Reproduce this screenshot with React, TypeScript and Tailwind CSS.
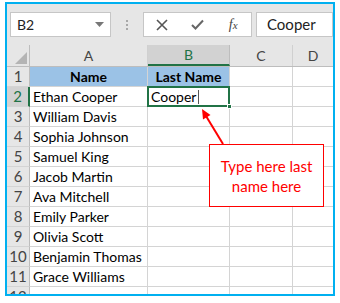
import React from "react";

const names = [
  "Ethan Cooper",
  "William Davis",
  "Sophia Johnson",
  "Samuel King",
  "Jacob Martin",
  "Ava Mitchell",
  "Emily Parker",
  "Olivia Scott",
  "Benjamin Thomas",
  "Grace Williams",
];

const font = { fontFamily: "Lato, 'Open Sans', 'Liberation Sans', sans-serif" };

function RowHead({ n, active }: { n: number | string; active?: boolean }) {
  return (
    <div
      className={
        "w-[23px] shrink-0 h-full flex items-center justify-center text-[15px] border-b border-[#d4d4d4] " +
        (active
          ? "bg-[#d2d2d2] text-[#217346] border-r-2 border-r-[#217346]"
          : "bg-[#e6e6e6] text-[#444] border-r border-r-[#bdbdbd]")
      }
    >
      {n}
    </div>
  );
}

export default function App() {
  return (
    <div className="w-[340px] h-[303px] bg-white pt-[2px] pl-[5px]" style={font}>
      <div className="w-[330px] h-[294px] border-2 border-[#00b0f0] overflow-hidden bg-white flex flex-col">
        {/* formula bar */}
        <div className="h-[41px] shrink-0 bg-[#e6e6e6] flex items-start pt-[8px] pl-[3px] gap-0">
          <div className="w-[101px] h-[25px] bg-white border border-[#c6c6c6] flex items-center pl-[6px] pr-[6px] justify-between">
            <span className="text-[14px] text-[#222]">B2</span>
            <svg width="9" height="5" viewBox="0 0 9 5">
              <path d="M0 0 L9 0 L4.5 5 Z" fill="#777" />
            </svg>
          </div>
          <div className="w-[32px] h-[25px] flex items-center justify-center">
            <div className="flex flex-col gap-[2px]">
              <div className="w-[2px] h-[2px] bg-[#a8a8a8]" />
              <div className="w-[2px] h-[2px] bg-[#a8a8a8]" />
              <div className="w-[2px] h-[2px] bg-[#a8a8a8]" />
            </div>
          </div>
          <div className="w-[109px] h-[25px] bg-white border border-[#c6c6c6] flex items-center">
            <div className="w-[36px] flex justify-center">
              <svg width="12" height="12" viewBox="0 0 12 12">
                <path d="M1 1 L11 11 M11 1 L1 11" stroke="#555" strokeWidth="1.6" />
              </svg>
            </div>
            <div className="w-[36px] flex justify-center">
              <svg width="13" height="11" viewBox="0 0 13 11">
                <path d="M1 6 L4.5 9.5 L12 1.5" stroke="#666" strokeWidth="2" fill="none" />
              </svg>
            </div>
            <div className="w-[36px] flex justify-center">
              <span className="text-[14px] italic text-[#444]" style={{ fontFamily: "'Liberation Serif', serif" }}>
                f<span className="text-[11px]">x</span>
              </span>
            </div>
          </div>
          <div className="ml-[4px] flex-1 h-[25px] bg-white border border-[#c6c6c6] flex items-center pl-[10px]">
            <span className="text-[15px] text-[#222]">Cooper</span>
          </div>
        </div>

        {/* column header */}
        <div className="h-[22px] shrink-0 flex bg-[#e6e6e6] border-b border-[#bdbdbd]">
          <div className="w-[23px] shrink-0 relative border-r border-[#bdbdbd]">
            <svg className="absolute right-[2px] bottom-[2px]" width="12" height="12" viewBox="0 0 12 12">
              <path d="M12 0 L12 12 L0 12 Z" fill="#b4b4b4" />
            </svg>
          </div>
          <div className="w-[118px] shrink-0 flex items-center justify-center text-[14px] text-[#444] border-r border-[#d0d0d0]">A</div>
          <div className="w-[82px] shrink-0 flex items-center justify-center text-[14px] text-[#217346] bg-[#d2d2d2] border-b-2 border-[#217346] border-r border-r-[#bdbdbd]">B</div>
          <div className="w-[63px] shrink-0 flex items-center justify-center text-[14px] text-[#444] border-r border-[#d0d0d0]">C</div>
          <div className="flex-1 flex items-center justify-center text-[14px] text-[#444]">D</div>
        </div>

        {/* grid */}
        <div className="relative flex-1">
          {/* row 1 */}
          <div className="h-[20px] flex">
            <RowHead n={1} />
            <div className="w-[118px] shrink-0 bg-[#9bc2e6] border-b border-r border-[#d4d4d4] flex items-center justify-center text-[14px] font-bold text-black">Name</div>
            <div className="w-[82px] shrink-0 bg-[#9bc2e6] border-b border-r border-[#d4d4d4] flex items-center justify-center text-[14px] font-bold text-black">Last Name</div>
            <div className="w-[63px] shrink-0 border-b border-r border-[#d4d4d4]" />
            <div className="flex-1 border-b border-[#d4d4d4]" />
          </div>
          {names.map((nm, i) => (
            <div key={nm} className="h-[20px] flex">
              <RowHead n={i + 2} active={i === 0} />
              <div className="w-[118px] shrink-0 border-b border-r border-[#d4d4d4] flex items-center pl-[3px] text-[14px] text-black whitespace-nowrap">{nm}</div>
              {i === 0 ? (
                <div className="w-[82px] shrink-0 relative">
                  <div className="absolute left-[-1px] top-[-1px] w-[83px] h-[21px] border-2 border-[#217346] flex items-center pl-[2px] text-[14px] text-black z-10">
                    Cooper<span className="ml-[2px] w-[1px] h-[14px] bg-[#555]" />
                    <div className="absolute right-[-4px] bottom-[-4px] w-[5px] h-[5px] bg-[#217346] border border-white" />
                  </div>
                </div>
              ) : (
                <div className="w-[82px] shrink-0 border-b border-r border-[#d4d4d4]" />
              )}
              <div className="w-[63px] shrink-0 border-b border-r border-[#d4d4d4]" />
              <div className="flex-1 border-b border-[#d4d4d4]" />
            </div>
          ))}
          <div className="h-[20px] flex">
            <RowHead n={12} />
            <div className="w-[118px] shrink-0 border-r border-[#d4d4d4]" />
            <div className="w-[82px] shrink-0 border-r border-[#d4d4d4]" />
            <div className="w-[63px] shrink-0 border-r border-[#d4d4d4]" />
          </div>

          {/* callout */}
          <div className="absolute left-[202px] top-[77px] w-[115px] h-[63px] bg-white border border-[#ff0000] flex items-center justify-center text-center text-[15px] leading-[20px] text-[#ff0000] z-20">
            Type here last
            <br />
            name here
          </div>
          <svg className="absolute left-0 top-0 z-20" width="326" height="200" viewBox="0 0 326 200">
            <line x1="216" y1="77" x2="199" y2="49" stroke="#ff0000" strokeWidth="2" />
            <path d="M195 42 L203.5 48 L196 52.5 Z" fill="#ff0000" />
          </svg>
        </div>
      </div>
    </div>
  );
}
